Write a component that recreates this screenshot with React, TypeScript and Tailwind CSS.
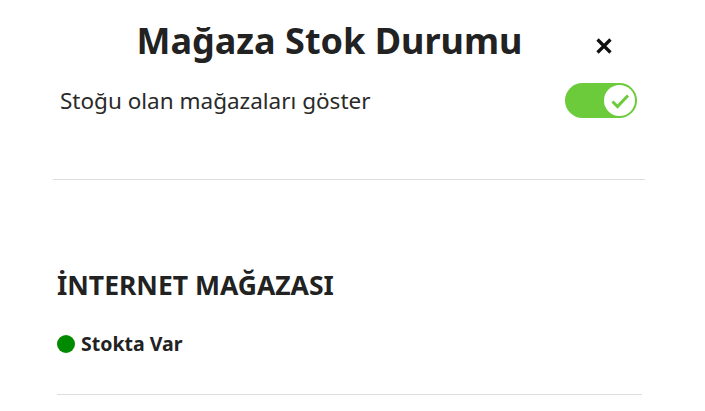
import { useState } from 'react';

const font = { fontFamily: '"Noto Sans", "Open Sans", sans-serif' };

function Toggle({ on, onChange }: { on: boolean; onChange: (v: boolean) => void }) {
  return (
    <button
      type="button"
      onClick={() => onChange(!on)}
      className={`flex h-[35px] w-[72px] shrink-0 items-center rounded-full p-[2px] ${
        on ? 'justify-end bg-[#6ccb3a]' : 'justify-start bg-[#cfcfcf]'
      }`}
    >
      <span className="flex h-[31px] w-[31px] items-center justify-center rounded-full bg-white">
        {on && (
          <svg width="20" height="20" viewBox="0 0 20 20" fill="none">
            <path d="M2.5 10.5l5 5L18 4.5" stroke="#6ccb3a" strokeWidth="3" />
          </svg>
        )}
      </span>
    </button>
  );
}

export default function App() {
  const [onlyInStock, setOnlyInStock] = useState(true);

  return (
    <div className="h-[411px] w-[705px] overflow-hidden bg-white text-[#222]" style={font}>
      {/* Header */}
      <div className="flex items-center pl-[54px] pr-[93px] pt-[17px]">
        <h2 className="flex-1 pl-[9px] text-center text-[36px] font-bold leading-[48px]">
          Mağaza Stok Durumu
        </h2>
        <button type="button" className="mt-[9px] flex h-4 w-4 items-center justify-center">
          <svg width="16" height="16" viewBox="0 0 16 16">
            <path d="M1.5 1.5l13 13M14.5 1.5l-13 13" stroke="#111" strokeWidth="3.2" />
          </svg>
        </button>
      </div>

      {/* Filter row */}
      <div className="mt-[18px] flex items-start justify-between pl-[60px] pr-[68px]">
        <span className="mt-[4px] text-[22.5px] leading-[28px] text-[#2a2a2a]">
          Stoğu olan mağazaları göster
        </span>
        <Toggle on={onlyInStock} onChange={setOnlyInStock} />
      </div>

      <div className="ml-[53px] mr-[60px] mt-[61px] h-px bg-[#dddddd]" />

      {/* Store list */}
      <div className="ml-[57px] mr-[63px] pt-[88px]">
        <h3 className="text-[26.5px] font-bold leading-[34px]">İNTERNET MAĞAZASI</h3>
        <div className="mt-[29px] flex items-center gap-[6px]">
          <span className="h-[18px] w-[18px] rounded-full bg-[#008a00]" />
          <span className="text-[19.5px] font-bold leading-[26px]">Stokta Var</span>
        </div>
        <div className="mt-[37px] h-px bg-[#dddddd]" />
      </div>
    </div>
  );
}
